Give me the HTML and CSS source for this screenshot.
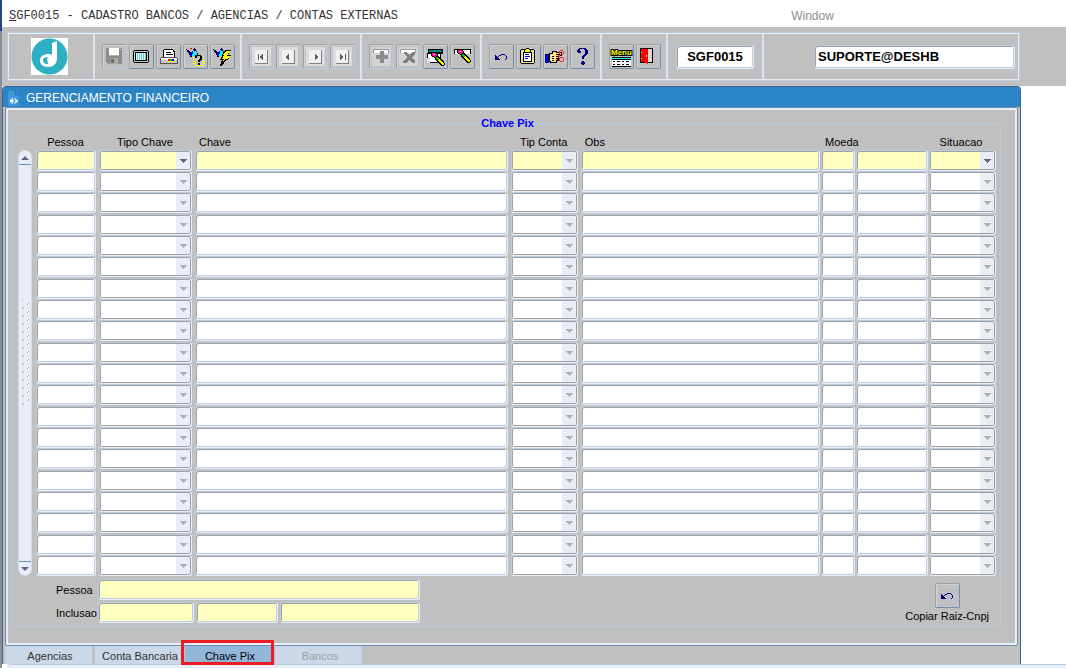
FILE: index.html
```
<!DOCTYPE html>
<html lang="pt-BR">
<head>
  <meta charset="UTF-8" />
  <meta name="viewport" content="width=device-width, initial-scale=1.0"/>
  <title>SGF0015 - Cadastro Bancos</title>
  <link rel="stylesheet" href="styles.css">
</head>
<body>
  <svg class="defs" aria-hidden="true">
    <symbol id="undo" viewBox="1 1 23 23">
      <path d="M6 11h1v1h1v1h1v1h1v1h1v1H6zM9 12h1v1H9zM10 11h2v1h-2zM12 10h4v1h-4zM16 11h1v1h-1zM17 12h1v3h-1zM16 15h1v1h-1z" fill="#000080"/>
    </symbol>
    <symbol id="lamp" viewBox="0 0 12 10">
      <path d="M0 1h1v1h1v1h1v1h1v1h1v1h1v2H4V7H3V5H2V4H1V2H0z" fill="#000"/>
      <path d="M2 2h1v1h1v1h1v1H4V4H2z" fill="#000080"/>
      <path d="M4 5h1V4h1V3h2v3H7v2H4z" fill="#00f"/>
      <path d="M7 3h2v1h1v2h1v1H9v1H6V6h1z" fill="#0ff"/>
      <path d="M8 0h1v1h1v2h1v1h-1V3H8V2H7V1h1z" fill="#000080"/>
      <path d="M4 8h2v1H4zM11 5h1v2h-1zM9 7h2v1H9z"/>
    </symbol>
    <symbol id="pen" viewBox="0 0 14 14">
      <path d="M1 0h4v1h1v1h1v2h1v1h1v1h1v1h1v1h1v1h1v2h1v2h-1v1h-3v-1H9v-1H8v-1H7v-1H6V9H5V8H4V6H3V5H1V4H0V1h1z" fill="#000"/>
      <path d="M1 1h4v1h1v2H5v1H3V4H1z" fill="#f0a"/>
      <path d="M1 1h2v1H1zM4 3h1v2H4z" fill="#f22"/>
      <path d="M2 2h2v1H2z" fill="#f9f"/>
      <path d="M5 5h2v1h1v2H6V7H5z" fill="#0c0"/>
      <path d="M8 7h1v1h1v1h1v1h1v1h1v2h-2v-1h-1v-1H9v-1H8V9H7V8h1z" fill="#ff0"/>
    </symbol>
    <symbol id="nav" viewBox="1 1 23 23">
      <path d="M3 3h19v19H3z" fill="#dcdcdc"/>
      <path d="M6 6h13v14H6z" fill="#808080"/>
      <path d="M6 6h12v13H6z" fill="#f0f0f0"/>
    </symbol>
  </svg>

  <header class="menubar">
    <h1><u>S</u>GF0015 - CADASTRO BANCOS / AGENCIAS / CONTAS EXTERNAS</h1>
    <button class="menu-item">Window</button>
  </header>

  <div class="toolbar">
    <div class="toolbar-frame">
      <div class="group brand">
        <svg class="logo" viewBox="0 0 37 37" role="img" aria-label="Logo">
          <rect width="37" height="37" fill="#fff"/>
          <circle cx="18.500" cy="18.500" r="18" fill="#2fafc3"/>
          <path d="M21 5l5-2v17c0 6-4 9-9 9-5 0-8-3-8-6 0-5 4-7 8-7 2 0 3 0 4 1zM17 19c-3 0-5 1-5 3 0 3 2 4 4 4 3 0 5-2 5-4s-1-3-4-3z" fill="#fff"/>
          <path d="M16 20l6-3v5c-1 3-3 4-5 4z" fill="#fff"/>
        </svg>
      </div>
      <div class="group">
        <button class="tool" disabled aria-label="Salvar"><svg viewBox="1 1 23 23"><path d="M4 4h16v16H6l-2-2z" fill="#8c8c8c"/><path d="M7 4h10v7H7z" fill="#fff"/><path d="M7 11h10v1H7z" fill="#b4b4b4"/><path d="M8 14h8v6H8z" fill="#a9a9a9"/><path d="M9 15h3v4H9z" fill="#6d6d6d"/><path d="M18 5h1v1h-1z" fill="#ddd"/></svg></button>
        <button class="tool" aria-label="Tela"><svg viewBox="1 1 23 23"><path d="M5 6h14v1h1v11h-1v1H5v-1H4V7h1z"/><path d="M5 7h14v11H5z" fill="#c8c8c8"/><path d="M6 8h12v9H6z"/><path d="M7 9h10v7H7z" fill="#e8ffff"/><path d="M8 9h1v7H8zM10 9h1v7h-1zM12 9h1v7h-1zM14 9h1v7h-1zM16 9h1v7h-1z" fill="#60d8d8"/></svg></button>
        <button class="tool" aria-label="Imprimir"><svg viewBox="1 1 23 23"><path d="M8 5h9v1h1v1h1v7H7V6h1z"/><path d="M8 6h9v2h1v5H8z" fill="#fff"/><path d="M10 8h5v1h-5zM10 10h7v1h-7z"/><path d="M5 13h16v1h1v6H4v-6h1z" fill="#555"/><path d="M5 14h16v2H5z" fill="#fff"/><path d="M5 16h16v3H5z" fill="#c8c8c8"/><path d="M12 15h2v2h-2z" fill="#f00"/><path d="M14 15h2v2h-2z" fill="#0c0"/><path d="M16 15h2v2h-2z" fill="#00f"/><path d="M12 17h6v1h-6z" fill="#ff0"/></svg></button>
        <button class="tool" aria-label="Entrar consulta"><svg viewBox="1 1 23 23"><use href="#lamp" x="3" y="4" width="12" height="10"/><path d="M7 4h2v1H7z" fill="#f00"/><path d="M10 13h1v1h-1zM12 13h1v1h-1zM10 15h1v1h-1zM12 15h1v1h-1zM20 13h1v1h-1zM20 15h1v1h-1zM10 17h3v1h-3zM19 17h3v1h-3zM10 19h3v1h-3zM19 19h3v1h-3zM12 21h9v1h-9z" fill="#ff0"/><path d="M13 11h5v1h1v4h-1v1h-1v1h-2v-2h1v-1h1v-3h-3v2h-2v-2h1zM15 19h2v2h-2z"/></svg></button>
        <button class="tool" aria-label="Executar consulta"><svg viewBox="1 1 23 23"><use href="#lamp" x="3" y="4" width="12" height="10"/><path d="M15 6h6l-3 5h3l-3 5h-2l-4 6h-2l2-6h-2l3-5h-1z"/><path d="M16 7h4l-3 5h3l-3 3h-2l-3 5 2-5h-2l2-4h-1z" fill="#ff0"/></svg></button>
      </div>
      <div class="group">
        <button class="tool" disabled aria-label="Primeiro"><svg viewBox="1 1 23 23"><use href="#nav" x="1" y="1" width="23" height="23"/><path d="M9 10h1v6H9zM11 12h1v-1h1v-1h1v6h-1v-1h-1v-1h-1z" fill="#606060"/></svg></button>
        <button class="tool" disabled aria-label="Anterior"><svg viewBox="1 1 23 23"><use href="#nav" x="1" y="1" width="23" height="23"/><path d="M10 12h1v-1h1v-1h1v6h-1v-1h-1v-1h-1z" fill="#606060"/></svg></button>
        <button class="tool" disabled aria-label="Próximo"><svg viewBox="1 1 23 23"><use href="#nav" x="1" y="1" width="23" height="23"/><path d="M12 10h1v1h1v1h1v2h-1v1h-1v1h-1z" fill="#606060"/></svg></button>
        <button class="tool" disabled aria-label="Último"><svg viewBox="1 1 23 23"><use href="#nav" x="1" y="1" width="23" height="23"/><path d="M10 10h1v1h1v1h1v2h-1v1h-1v1h-1zM15 10h1v6h-1z" fill="#606060"/></svg></button>
      </div>
      <div class="group">
        <button class="tool" disabled aria-label="Inserir"><svg viewBox="1 1 23 23"><path d="M3 3h19v19H3z" fill="#d4d4d4"/><path d="M4 5h16v4H4z" fill="#999"/><path d="M5 6h14v3H5z" fill="#fff"/><path d="M11 7h4v4h4v4h-4v4h-4v-4H7v-4h4z" fill="#8c8c8c"/></svg></button>
        <button class="tool" disabled aria-label="Remover"><svg viewBox="1 1 23 23"><path d="M3 3h19v19H3z" fill="#d4d4d4"/><path d="M4 5h16v4H4z" fill="#999"/><path d="M5 6h14v3H5z" fill="#fff"/><path d="M8 8h3l2 3 3-3h3v2l-3 3 3 4v2h-3l-3-3-3 3H7v-2l4-4-3-3z" fill="#808080"/></svg></button>
        <button class="tool" aria-label="Limpar registro"><svg viewBox="1 1 23 23"><path d="M5 5h15v5H5z"/><path d="M6 6h13v2H6z" fill="#088"/><path d="M4 9h14v10H4z"/><path d="M5 10h12v8H5z" fill="#fff"/><path d="M4 14h3v5H4z" fill="#ddd"/><use href="#pen" x="8" y="8" width="14" height="14"/></svg></button>
        <button class="tool" aria-label="Limpar campo"><svg viewBox="1 1 23 23"><path d="M4 5h17v5H4z"/><path d="M5 6h15v4H5z" fill="#fff"/><use href="#pen" x="7" y="5" width="14" height="14"/></svg></button>
      </div>
      <div class="group">
        <button class="tool" aria-label="Desfazer"><svg viewBox="1 1 23 23"><use href="#undo" x="1" y="1" width="23" height="23"/></svg></button>
        <button class="tool" aria-label="Colar"><svg viewBox="1 1 23 23"><path d="M5 5h13v1h1v13h-1v1H5v-1H4V6h1z"/><path d="M5 6h13v13H5z" fill="#e8e0a0"/><path d="M7 8h9v10H7z"/><path d="M8 9h7v8H8z" fill="#fff"/><path d="M9 5h1V4h3v1h1v1h1v3H8V6h1z"/><path d="M10 5h3v1h1v2H9V6h1z" fill="#ff0"/><path d="M9 10h4v1H9zM9 12h5v1H9zM9 14h3v1H9z" fill="#00f"/></svg></button>
        <button class="tool" aria-label="Recortar"><svg viewBox="1 1 23 23"><path d="M2 10h4v9H2z" fill="#000080"/><path d="M3 11h2v7H3z" fill="#00f"/><path d="M6 9h3V7h5v1h5v4h-3v5h-2v2H7v-1H6z"/><path d="M7 10h3V8h3v1h5v1h-5v1h2v1h-2v1h2v1h-2v1h1v1h-1v2H8v-1H7z" fill="#ffe680"/><path d="M9 12h2v1H9zM9 14h2v1H9zM9 16h2v1H9z"/><path d="M17 6h3v1h1v3h-1v1h-3v-1h-1V7h1zM17 7v3h3V7zM17 13h3v1h1v3h-1v1h-3v-1h-1v-3h1zM17 14v3h3v-3zM15 11h2v2h-2z" fill="#f22" fill-rule="evenodd"/></svg></button>
        <button class="tool" aria-label="Ajuda"><svg viewBox="1 1 23 23"><path d="M9 4h7v1h1v1h1v4h-1v1h-1v1h-1v1h-1v2h-2v-3h1v-1h1v-1h1V6h-1V5h-4v2h1v2H8V8H7V6h1V5h1zM12 17h2v1h1v2h-1v1h-2v-1h-1v-2h1z" fill="#000080"/></svg></button>
      </div>
      <div class="group">
        <button class="tool" aria-label="Menu"><svg viewBox="1 1 23 23"><text class="menu-glyph" x="2" y="11">Menu</text><path d="M3 13h19v10H3z"/><path d="M3 14h19v1H3z" fill="#0ff"/><path d="M3 16h19v6H3z" fill="#fff"/><path d="M4 17h2v1H4zM8 17h3v1H8zM13 17h2v1h-2zM17 17h3v1h-3zM4 20h2v1H4zM8 20h3v1H8zM13 20h2v1h-2zM17 20h3v1h-3z"/></svg></button>
        <button class="tool" aria-label="Sair"><svg viewBox="1 1 23 23"><path d="M4 4h13v15H4z"/><path d="M12 5h4v13h-4z" fill="#d8d8d8"/><path d="M5 5h7v15h-1v-1H9v-1H5z" fill="#f00"/><path d="M5 8h1v1H5zM5 14h1v1H5zM10 11h1v2h-1z" fill="#ff0"/></svg></button>
      </div>
      <div class="group program">
        <input class="field" type="text" value="SGF0015" aria-label="Programa" readonly>
      </div>
      <div class="group user">
        <input class="field" type="text" value="SUPORTE@DESHB" aria-label="Usuario" readonly>
      </div>
    </div>
  </div>

  <main class="window">
    <div class="titlebar">
      <svg viewBox="0 0 14 16" aria-hidden="true"><path d="M1 0h8l4 4v12H1z" fill="#3a9ad9"/><path d="M9 0v4h4" fill="none" stroke="#1c6ba6"/><path d="M3 9h2V7h1v2h1v3H6v2H5v-2H3zM8 7l4 4-4 3v-2h1v-3H8z" fill="#fff"/></svg>
      <h2>GERENCIAMENTO FINANCEIRO</h2>
    </div>

    <div class="panel">
      <fieldset>
        <legend>Chave Pix</legend>
        <div class="records">
          <div class="scroll">
            <button class="scroll-btn up" aria-label="Subir"></button>
            <div class="scroll-track"></div>
            <button class="scroll-btn down" aria-label="Descer"></button>
          </div>
          <table>
            <colgroup>
              <col class="c-pessoa"><col class="c-tipo"><col class="c-chave"><col class="c-conta">
              <col class="c-obs"><col class="c-moeda"><col class="c-desc"><col class="c-sit">
            </colgroup>
            <thead>
              <tr>
                <th>Pessoa</th>
                <th>Tipo Chave</th>
                <th class="left">Chave</th>
                <th>Tip Conta</th>
                <th class="left">Obs</th>
                <th class="left" colspan="2">Moeda</th>
                <th>Situacao</th>
              </tr>
            </thead>
            <tbody id="rows"></tbody>
          </table>
        </div>

        <div class="details">
          <div class="lines">
            <div class="line">
              <label for="pessoa">Pessoa</label>
              <input class="field wide" id="pessoa" type="text">
            </div>
            <div class="line">
              <label for="inclusao">Inclusao</label>
              <input class="field user-inc" id="inclusao" type="text">
              <input class="field date-inc" type="text" aria-label="Data inclusao">
              <input class="field name-inc" type="text" aria-label="Nome inclusao">
            </div>
          </div>
          <div class="copy">
            <button class="tool" id="copiar" aria-label="Copiar Raiz-Cnpj"><svg viewBox="1 1 23 23"><use href="#undo" x="1" y="1" width="23" height="23"/></svg></button>
            <label for="copiar">Copiar Raiz-Cnpj</label>
          </div>
        </div>
      </fieldset>
    </div>

    <nav class="tabs">
      <button>Agencias</button>
      <button>Conta Bancaria</button>
      <button class="active">Chave Pix</button>
      <button disabled>Bancos</button>
    </nav>
  </main>
  <footer class="status"></footer>

  <script>
    const columns = [
      { name: "Pessoa" },
      { name: "Tipo Chave", list: true },
      { name: "Chave" },
      { name: "Tip Conta", list: true, locked: true },
      { name: "Obs" },
      { name: "Moeda" },
      { name: "Descricao Moeda" },
      { name: "Situacao", list: true }
    ];
    const rowsEl = document.getElementById("rows");

    for (let i = 0; i < 20; i++) {
      const row = document.createElement("tr");
      columns.forEach(col => {
        const cell = document.createElement("td");
        const control = document.createElement(col.list ? "select" : "input");
        control.className = "field";
        control.setAttribute("aria-label", col.name + " " + (i + 1));
        if (col.list) {
          control.disabled = i > 0 || !!col.locked;
        } else {
          control.type = "text";
        }
        cell.appendChild(control);
        row.appendChild(cell);
      });
      rowsEl.appendChild(row);
    }
  </script>
</body>
</html>
```
FILE: styles.css
```
* {
  box-sizing: border-box;
}

body {
  margin: 0;
  padding-left: 2px;
  min-height: 100vh;
  display: flex;
  flex-direction: column;
  font-family: "Liberation Sans", Arial, sans-serif;
  font-size: 11px;
  color: #000;
  background: linear-gradient(#1f4788 31px, #8a8f96 31px) left / 2px 100% no-repeat #fff;
}

button, input, select {
  font: inherit;
  color: inherit;
  margin: 0;
  padding: 0;
}

h1, h2 {
  margin: 0;
  font-weight: normal;
  font-size: 12px;
}

.defs {
  position: absolute;
  width: 0;
  height: 0;
}

/* menu bar */
.menubar {
  display: flex;
  align-items: center;
  height: 27px;
  padding: 4px 0 0 7px;
  background: #fff;
}

.menubar h1 {
  flex: 0 0 74%;
  font-family: "Liberation Mono", "Courier New", monospace;
  color: #333;
}

.menu-item {
  border: none;
  background: none;
  font-size: 12px;
  color: #8e8e8e;
}

/* toolbar */
.toolbar {
  padding: 5px 46px 5px 5px;
  background: #c0c0c0;
}

.toolbar-frame {
  display: flex;
  height: 49px;
  border: 1px solid #b8cce4;
  box-shadow: inset 0 0 0 1px #e9eef6;
}

.group {
  display: flex;
  align-items: center;
  gap: 2px;
  padding: 0 5px 0 7px;
  border-right: 2px solid #dbe5f2;
}

.brand {
  width: 87px;
  padding: 0 0 0 23px;
}

.logo {
  width: 37px;
  height: 37px;
}

.tool {
  width: 25px;
  height: 25px;
  border: 1px solid;
  border-color: #a0a0a0 #6f8fb0 #6f8fb0 #a0a0a0;
  border-radius: 2px;
  background: #c0c0c0;
  box-shadow: inset 1px 1px #cdd3dc;
}

.tool:disabled {
  border-color: #a0a0a0 #b8cce4 #b8cce4 #a0a0a0;
}

.tool svg {
  display: block;
  width: 23px;
  height: 23px;
  overflow: visible;
  shape-rendering: crispEdges;
}

.menu-glyph {
  font-size: 8px;
  font-weight: bold;
  fill: #ff0;
  stroke: #000;
  stroke-width: 2px;
  paint-order: stroke;
}

.program {
  width: 96px;
  padding: 0 8px;
}

.user {
  flex: 1;
  padding: 0 4px 0 50px;
  border-right: none;
}

.toolbar .field {
  height: 24px;
  font-size: 13px;
  font-weight: bold;
  padding: 0 3px;
}

.program .field {
  text-align: center;
}

/* fields */
.field {
  display: block;
  width: 100%;
  height: 21px;
  border: 1px solid;
  border-color: #b8cce4 #e9eef6 #e9eef6 #b8cce4;
  border-radius: 3px;
  background-color: #fff;
  box-shadow: inset 1px 1px #a0a0a0, inset -1px -1px #b8cce4;
}

select.field {
  appearance: none;
  opacity: 1;
  box-shadow: inset 0 0 0 1px #a0a0a0;
  background-image:
    url("data:image/svg+xml,%3Csvg xmlns='http://www.w3.org/2000/svg' width='14' height='17' shape-rendering='crispEdges'%3E%3Cpath d='M0 0h14v17H0z' fill='%23e9eef6'/%3E%3Cpath d='M4 7h7v1H4zM5 8h5v1H5zM6 9h3v1H6zM7 10h1v1H7z' fill='%23606880'/%3E%3C/svg%3E");
  background-repeat: no-repeat;
  background-position: right 1px top 1px;
}

select.field:disabled {
  background-image:
    url("data:image/svg+xml,%3Csvg xmlns='http://www.w3.org/2000/svg' width='14' height='17' shape-rendering='crispEdges'%3E%3Cpath d='M0 0h14v17H0z' fill='%23e9eef6'/%3E%3Cpath d='M4 7h7v1H4zM5 8h5v1H5zM6 9h3v1H6zM7 10h1v1H7z' fill='%23b0b0b0'/%3E%3C/svg%3E");
}

/* window */
.window {
  flex: 1;
  display: flex;
  flex-direction: column;
  margin-right: 45px;
  padding: 0 2px;
  border: 1px solid #3f6491;
  border-bottom: none;
  border-radius: 4px 4px 0 0;
  background: #c0c0c0;
}

.titlebar {
  display: flex;
  align-items: center;
  gap: 6px;
  height: 20px;
  margin: 0 -2px;
  padding: 2px 0 0 4px;
  border-radius: 3px 3px 0 0;
  background: #2b84c4;
  color: #fff;
}

.titlebar svg {
  width: 13px;
  height: 15px;
}

.panel {
  padding: 6px 14px 16px 4px;
  border: 1px solid #6f8fb0;
  border-radius: 2px;
  box-shadow: inset 0 0 0 2px #e9eef6;
}

fieldset {
  margin: 2px;
  min-width: 0;
  padding: 0 3px 3px 5px;
  border: 1px solid #b8cce4;
  border-radius: 5px;
}

legend {
  margin: 0 auto;
  padding: 0;
  height: 14px;
  line-height: 14px;
  font-weight: bold;
  color: #0000ff;
}

.records {
  display: flex;
  gap: 4px;
}

/* scroll bar */
.scroll {
  display: flex;
  flex-direction: column;
  width: 14px;
  margin-top: 20px;
  border-radius: 7px;
  border: 1px solid #d3deec;
  background: #e9eef6;
}

.scroll-btn {
  height: 14px;
  border: none;
  background: none;
}

.scroll-btn::before {
  content: "";
  display: block;
  width: 0;
  margin: 0 auto;
  border: 4px solid transparent;
}

.scroll-btn.up {
  border-bottom: 1px solid #6f8fb0;
}

.scroll-btn.up::before {
  border-top: none;
  border-bottom-color: #5a6680;
}

.scroll-btn.down {
  border-top: 1px solid #6f8fb0;
}

.scroll-btn.down::before {
  border-bottom: none;
  border-top-color: #5a6680;
}

.scroll-track {
  flex: 1;
  background:
    url("data:image/svg+xml,%3Csvg xmlns='http://www.w3.org/2000/svg' width='8' height='8' shape-rendering='crispEdges'%3E%3Cpath d='M1 5h1v1H1zM2 4h1v1H2zM6 1h1v1H6zM7 0h1v1H7z' fill='%238ba6c8'/%3E%3Cpath d='M1 4h1v1H1zM6 0h1v1H6z' fill='%23fff'/%3E%3C/svg%3E")
    center / 8px 8px repeat-y;
  background-clip: content-box;
  padding: 135px 2px 156px;
}

/* records */
table {
  flex: 1;
  table-layout: fixed;
  width: 100%;
  border-collapse: collapse;
}

.c-pessoa { width: 63px; }
.c-tipo { width: 96px; }
.c-conta { width: 70px; }
.c-obs { width: 25%; }
.c-moeda { width: 35px; }
.c-desc { width: 73px; }
.c-sit { width: 68px; }

th {
  height: 20px;
  padding: 4px 4px 0 0;
  font-weight: normal;
  text-align: center;
}

th.left {
  padding-left: 4px;
  text-align: left;
}

td {
  height: 21px;
  padding: 0 3px 0 0;
  vertical-align: top;
}

td:nth-child(n+5) {
  padding-right: 1px;
}

tbody tr:nth-child(3n) td {
  height: 22px;
}

tbody tr:first-child .field,
.details .field {
  background-color: #ffffc0;
}

/* details */
.details {
  display: flex;
  justify-content: space-between;
  padding-top: 3px;
}

.lines {
  display: flex;
  flex-direction: column;
  gap: 2px;
}

.line {
  display: flex;
  align-items: center;
  gap: 2px;
}

.line label {
  width: 78px;
  padding-left: 38px;
}

.line .wide { width: 322px; }
.line .user-inc { width: 96px; }
.line .date-inc { width: 82px; }
.line .name-inc { width: 140px; }

.copy {
  display: flex;
  flex-direction: column;
  align-items: center;
  gap: 2px;
  padding: 4px 8px 0 0;
}

/* tabs */
.tabs {
  display: flex;
  gap: 3px;
  height: 18px;
}

.tabs button {
  position: relative;
  width: 87px;
  height: 18px;
  padding: 2px 0 0 3px;
  border: none;
  background: #cbd8ea;
  color: #333;
}

.tabs .active {
  background: #93b7d9;
  color: #000;
}

.tabs .active::after {
  content: "";
  position: absolute;
  inset: -6px -2px -1px -4px;
  border: 3px solid #ed1c24;
}

.tabs button:disabled {
  color: #9a9fa6;
}

/* status strip */
.status {
  height: 4px;
  margin-left: 5px;
  border-top: 1px solid #b8cce4;
  border-radius: 4px 0 0 0;
  background: #e9eef6;
}
```
